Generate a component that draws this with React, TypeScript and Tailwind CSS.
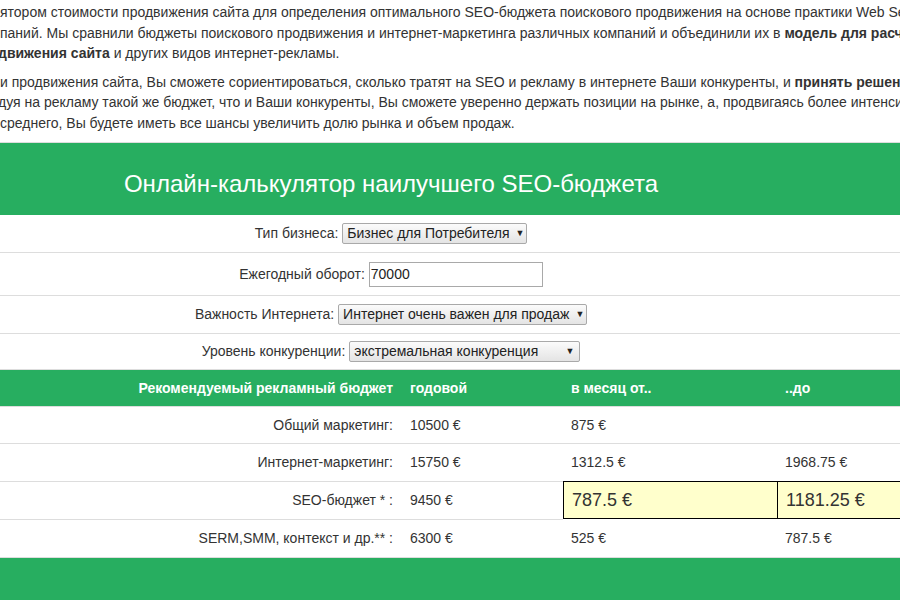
const green = 'bg-[#27ae60]';

function Select({ text, width, spread }: { text: string; width: string; spread?: boolean }) {
  return (
    <div
      className={`${width} h-[21px] flex items-center ${spread ? 'justify-between' : 'justify-start'} border border-[#a9a9a9] rounded-[2px] bg-gradient-to-b from-[#fbfbfb] to-[#e4e4e4] pl-[4px] pr-[5px] text-[#222] whitespace-nowrap`}
    >
      <span>{text}</span>
      <span className="text-[9px] ml-[6px]">▼</span>
    </div>
  );
}

function FormRow({ label, h, children }: { label: string; h: string; children: React.ReactNode }) {
  return (
    <div className={`${h} flex items-center justify-center gap-[4px] border-b border-[#ddd]`}>
      <span>{label}</span>
      {children}
    </div>
  );
}

const rows = [
  { label: 'Общий маркетинг:', year: '10500 €', from: '875 €', to: '', h: 'h-[37px]' },
  { label: 'Интернет-маркетинг:', year: '15750 €', from: '1312.5 €', to: '1968.75 €', h: 'h-[38px]' },
];

export default function App() {
  return (
    <div className="w-[900px] h-[600px] overflow-hidden bg-white font-['Liberation_Sans',Arial,sans-serif] text-[14px] text-[#333]">
      {/* intro text, cut at the window edges */}
      <div className="pt-[2px] leading-[20.5px] whitespace-nowrap">
        <div>ятором стоимости продвижения сайта для определения оптимального SEO-бюджета поискового продвижения на основе практики Web Se</div>
        <div>
          паний. Мы сравнили бюджеты поискового продвижения и интернет-маркетинга различных компаний и объединили их в{' '}
          <b>модель для расчета</b>
        </div>
        <div className="-ml-[2px]">
          <b>движения сайта</b> и других видов интернет-рекламы.
        </div>
      </div>
      <div className="mt-[8px] leading-[20.5px] whitespace-nowrap">
        <div>
          и продвижения сайта, Вы сможете сориентироваться, сколько тратят на SEO и рекламу в интернете Ваши конкуренты, и{' '}
          <b>принять решение</b>
        </div>
        <div className="-ml-[2px]">дуя на рекламу такой же бюджет, что и Ваши конкуренты, Вы сможете уверенно держать позиции на рынке, а, продвигаясь более интенси</div>
        <div>среднего, Вы будете иметь все шансы увеличить долю рынка и объем продаж.</div>
      </div>

      {/* calculator, wider than the window and centred at x=391 */}
      <div className="mt-[9px] -ml-[209px] w-[1200px] border-t border-[#ddd]">
        <div className={`${green} h-[72px] pt-[26px] text-center text-[24px] leading-[30px] text-white`}>
          Онлайн-калькулятор наилучшего SEO-бюджета
        </div>

        <FormRow label="Тип бизнеса:" h="h-[38px]">
          <Select text="Бизнес для Потребителя" width="w-[185px]" />
        </FormRow>
        <FormRow label="Ежегодный оборот:" h="h-[43px]">
          <div className="w-[174px] h-[25px] flex items-center border border-[#a9a9a9] bg-white px-[1px] text-[#222]">70000</div>
        </FormRow>
        <FormRow label="Важность Интернета:" h="h-[38px]">
          <Select text="Интернет очень важен для продаж" width="w-[249px]" />
        </FormRow>
        <FormRow label="Уровень конкуренции:" h="h-[36px]">
          <Select text="экстремальная конкуренция" width="w-[231px]" spread />
        </FormRow>

        <div className="grid grid-cols-[611px_161px_214px_214px]">
          <div className={`${green} h-[36px] flex items-center justify-end pr-[9px] font-bold text-white`}>Рекомендуемый рекламный бюджет</div>
          <div className={`${green} h-[36px] flex items-center pl-[8px] font-bold text-white`}>годовой</div>
          <div className={`${green} h-[36px] flex items-center pl-[8px] font-bold text-white`}>в месяц от..</div>
          <div className={`${green} h-[36px] flex items-center pl-[8px] font-bold text-white`}>..до</div>

          {rows.map((r) => (
            <div key={r.label} className="contents">
              <div className={`${r.h} flex items-center justify-end pr-[9px] border-t border-[#ddd]`}>{r.label}</div>
              <div className={`${r.h} flex items-center pl-[8px] border-t border-[#ddd]`}>{r.year}</div>
              <div className={`${r.h} flex items-center pl-[8px] border-t border-[#ddd]`}>{r.from}</div>
              <div className={`${r.h} flex items-center pl-[8px] border-t border-[#ddd]`}>{r.to}</div>
            </div>
          ))}

          <div className="h-[38px] flex items-center justify-end pr-[9px] border-t border-[#ddd]">SEO-бюджет * :</div>
          <div className="h-[38px] flex items-center pl-[8px] border-t border-[#ddd]">9450 €</div>
          <div className="h-[38px] flex items-center pl-[8px] border border-r-0 border-black bg-[#ffffcc] text-[18px]">787.5 €</div>
          <div className="h-[38px] flex items-center pl-[8px] border border-black bg-[#ffffcc] text-[18px]">1181.25 €</div>

          <div className="h-[38px] flex items-center justify-end pr-[9px] border-t border-[#ddd]">SERM,SMM, контекст и др.** :</div>
          <div className="h-[38px] flex items-center pl-[8px] border-t border-[#ddd]">6300 €</div>
          <div className="h-[38px] flex items-center pl-[8px]">525 €</div>
          <div className="h-[38px] flex items-center pl-[8px]">787.5 €</div>
        </div>

        <div className={`${green} h-[60px] border-t border-[#ddd]`} />
      </div>
    </div>
  );
}
